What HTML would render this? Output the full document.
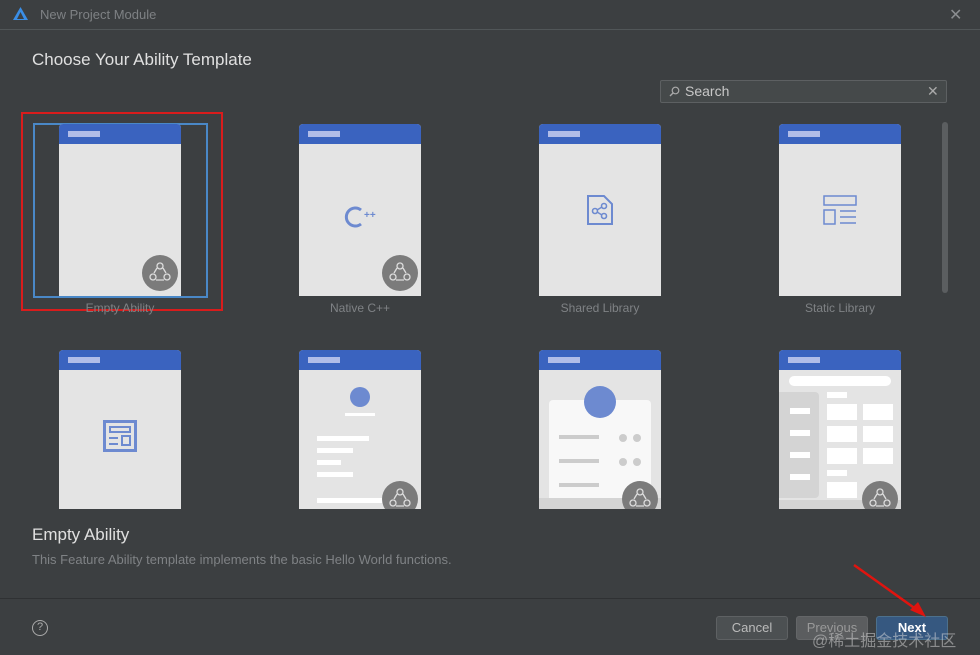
<!DOCTYPE html>
<html><head><meta charset="utf-8"><style>
*{margin:0;padding:0;box-sizing:border-box}
body{width:980px;height:655px;background:#3c3f41;font-family:"Liberation Sans","Noto Sans CJK SC",sans-serif;position:relative;overflow:hidden;color:#bbb}
.a{position:absolute}
.card{position:absolute;width:122px;background:#e4e4e4;border-radius:4px 4px 0 0;overflow:hidden}
.hd{height:20px;background:#3a63bf;position:relative}
.hd:after{content:"";position:absolute;left:9px;top:7px;width:32px;height:6px;background:#b1bde8}
.badge{position:absolute;left:83px;width:36px;height:36px;border-radius:50%;background:#7b7b7b}
.badge svg{position:absolute;left:0;top:0}
.lbl{position:absolute;width:122px;text-align:center;font-size:12px;color:#7f8285;top:301px}
.w{position:absolute;background:#fff}
.btn{position:absolute;top:616px;height:24px;border-radius:3px;font-size:13px;text-align:center;line-height:22px}
</style></head><body>
<div class="a" style="left:0;top:29px;width:980px;height:1px;background:#515658"></div>
<svg class="a" style="left:12px;top:6px" width="17" height="15" viewBox="0 0 17 15"><path d="M8.5 1L1 14h15z" fill="#3a8ee6"/><path d="M8.5 6L5 13h7z" fill="#3c3f41"/></svg>
<div class="a" style="left:40px;top:7px;font-size:13px;color:#7e8184">New Project Module</div>
<div class="a" style="left:949px;top:5px;font-size:16px;color:#8a8d90">✕</div>
<div class="a" style="left:32px;top:50px;font-size:17px;color:#e0e0e0">Choose Your Ability Template</div>
<div class="a" style="left:660px;top:80px;width:287px;height:23px;background:#45494a;border:1px solid #5d6062;border-radius:2px"></div>
<svg class="a" style="left:669px;top:86px" width="11" height="11"><circle cx="6.5" cy="4.5" r="3.3" stroke="#aaa" fill="none" stroke-width="1.2"/><path d="M4 7L1 10" stroke="#aaa" stroke-width="1.4"/></svg>
<div class="a" style="left:685px;top:83px;font-size:14px;color:#c8c8c8">Search</div>
<div class="a" style="left:927px;top:83px;font-size:14px;color:#aaa">✕</div>
<div class="a" style="left:942px;top:122px;width:6px;height:171px;background:#5b5e60;border-radius:3px"></div>

<!-- row 1 -->
<div class="a" style="left:33px;top:123px;width:175px;height:175px;border:2px solid #4a88c7"></div>
<div class="a" style="left:21px;top:112px;width:202px;height:199px;border:2px solid #d91c1c"></div>
<div class="card" style="left:59px;top:124px;height:172px"><div class="hd"></div><div class="badge" style="top:131px"><svg width="36" height="36"><g fill="none" stroke="#ddd" stroke-width="1.3"><circle cx="18" cy="11" r="3"/><circle cx="11" cy="22" r="3"/><circle cx="25" cy="22" r="3"/><path d="M15 13l-3 5M21 13l3 5M14 25h8"/></g></svg></div></div>
<div class="lbl" style="left:59px">Empty Ability</div>
<div class="card" style="left:299px;top:124px;height:172px"><div class="hd"></div>
<svg class="a" style="left:44px;top:80px" width="36" height="26"><path d="M18 6A9 9 0 1 0 18 20" fill="none" stroke="#6d8ad0" stroke-width="3"/><text x="21" y="14" font-size="10" font-weight="bold" fill="#6d8ad0" font-family="Liberation Sans">++</text></svg>
<div class="badge" style="top:131px"><svg width="36" height="36"><g fill="none" stroke="#ddd" stroke-width="1.3"><circle cx="18" cy="11" r="3"/><circle cx="11" cy="22" r="3"/><circle cx="25" cy="22" r="3"/><path d="M15 13l-3 5M21 13l3 5M14 25h8"/></g></svg></div></div>
<div class="lbl" style="left:299px">Native C++</div>
<div class="card" style="left:539px;top:124px;height:172px"><div class="hd"></div>
<svg class="a" style="left:46px;top:70px" width="30" height="32"><path d="M3 2h16l8 8v20H3z" fill="none" stroke="#6d8ad0" stroke-width="2"/><circle cx="10" cy="17" r="2.5" fill="none" stroke="#6d8ad0" stroke-width="1.6"/><circle cx="19" cy="12" r="2.5" fill="none" stroke="#6d8ad0" stroke-width="1.6"/><circle cx="19" cy="22" r="2.5" fill="none" stroke="#6d8ad0" stroke-width="1.6"/><path d="M12 16l5-3M12 18l5 3" stroke="#6d8ad0" stroke-width="1.4"/></svg>
</div>
<div class="lbl" style="left:539px">Shared Library</div>
<div class="card" style="left:779px;top:124px;height:172px"><div class="hd"></div>
<svg class="a" style="left:44px;top:71px" width="34" height="30"><rect x="1" y="1" width="32" height="9" fill="none" stroke="#6d8ad0" stroke-width="1.5"/><rect x="1" y="15" width="11" height="14" fill="none" stroke="#6d8ad0" stroke-width="1.5"/><path d="M17 16h16M17 22h16M17 28h16" stroke="#6d8ad0" stroke-width="1.5"/></svg>
</div>
<div class="lbl" style="left:779px">Static Library</div>

<!-- row 2 -->
<div class="card" style="left:59px;top:350px;height:159px"><div class="hd"></div>
<svg class="a" style="left:44px;top:70px" width="34" height="32"><rect x="1.5" y="1.5" width="31" height="29" fill="none" stroke="#6d8ad0" stroke-width="3"/><rect x="7" y="7" width="20" height="5" fill="none" stroke="#6d8ad0" stroke-width="2"/><path d="M6 18h9M6 24h9" stroke="#6d8ad0" stroke-width="2"/><rect x="19" y="16" width="8" height="9" fill="none" stroke="#6d8ad0" stroke-width="2"/></svg>
</div>
<div class="card" style="left:299px;top:350px;height:159px"><div class="hd"></div>
<div class="a" style="left:51px;top:37px;width:20px;height:20px;border-radius:50%;background:#6d8ad0"></div>
<div class="w" style="left:46px;top:63px;width:30px;height:3px"></div>
<div class="w" style="left:18px;top:86px;width:52px;height:5px"></div>
<div class="w" style="left:18px;top:98px;width:36px;height:5px"></div>
<div class="w" style="left:18px;top:110px;width:24px;height:5px"></div>
<div class="w" style="left:18px;top:122px;width:36px;height:5px"></div>
<div class="w" style="left:18px;top:148px;width:70px;height:5px"></div>
<div class="badge" style="top:131px"><svg width="36" height="36"><g fill="none" stroke="#ddd" stroke-width="1.3"><circle cx="18" cy="11" r="3"/><circle cx="11" cy="22" r="3"/><circle cx="25" cy="22" r="3"/><path d="M15 13l-3 5M21 13l3 5M14 25h8"/></g></svg></div></div>
<div class="card" style="left:539px;top:350px;height:159px"><div class="hd"></div>
<div class="w" style="left:10px;top:50px;width:102px;height:109px;background:#f8f8f8;border-radius:4px"></div>
<div class="a" style="left:45px;top:36px;width:32px;height:32px;border-radius:50%;background:#6d8ad0"></div>
<div class="a" style="left:20px;top:85px;width:40px;height:4px;background:#ccc"></div>
<div class="a" style="left:20px;top:109px;width:40px;height:4px;background:#ccc"></div>
<div class="a" style="left:20px;top:133px;width:40px;height:4px;background:#ccc"></div>
<div class="a" style="left:80px;top:84px;width:8px;height:8px;border-radius:50%;background:#ccc;box-shadow:14px 0 #ccc,0 24px #ccc,14px 24px #ccc"></div>
<div class="a" style="left:0;top:148px;width:122px;height:11px;background:#d4d4d4"></div>
<div class="badge" style="top:131px"><svg width="36" height="36"><g fill="none" stroke="#ddd" stroke-width="1.3"><circle cx="18" cy="11" r="3"/><circle cx="11" cy="22" r="3"/><circle cx="25" cy="22" r="3"/><path d="M15 13l-3 5M21 13l3 5M14 25h8"/></g></svg></div></div>
<div class="card" style="left:779px;top:350px;height:159px"><div class="hd"></div>
<div class="w" style="left:10px;top:26px;width:102px;height:10px;border-radius:5px"></div>
<div class="a" style="left:0;top:42px;width:40px;height:106px;background:#d4d4d4;border-radius:0 4px 4px 0"></div>
<div class="w" style="left:11px;top:58px;width:20px;height:6px;box-shadow:0 22px #fff,0 44px #fff,0 66px #fff"></div>
<div class="w" style="left:48px;top:42px;width:20px;height:6px"></div>
<div class="w" style="left:48px;top:54px;width:30px;height:16px;box-shadow:36px 0 #fff,0 22px #fff,36px 22px #fff,0 44px #fff,36px 44px #fff"></div>
<div class="w" style="left:48px;top:120px;width:20px;height:6px"></div>
<div class="w" style="left:48px;top:132px;width:30px;height:16px"></div>
<div class="a" style="left:0;top:150px;width:122px;height:9px;background:#d4d4d4"></div>
<div class="badge" style="top:131px"><svg width="36" height="36"><g fill="none" stroke="#ddd" stroke-width="1.3"><circle cx="18" cy="11" r="3"/><circle cx="11" cy="22" r="3"/><circle cx="25" cy="22" r="3"/><path d="M15 13l-3 5M21 13l3 5M14 25h8"/></g></svg></div></div>

<div class="a" style="left:32px;top:525px;font-size:17px;color:#e0e0e0">Empty Ability</div>
<div class="a" style="left:32px;top:552px;font-size:13px;color:#7f8285">This Feature Ability template implements the basic Hello World functions.</div>
<div class="a" style="left:0;top:598px;width:980px;height:1px;background:#2f3133"></div>
<div class="a" style="left:32px;top:620px;width:16px;height:16px;border:1.5px solid #aaa;border-radius:50%;font-size:11px;text-align:center;line-height:13px;color:#aaa">?</div>
<div class="btn" style="left:716px;width:72px;background:#4c5052;border:1px solid #5e6163;color:#bbb">Cancel</div>
<div class="btn" style="left:796px;width:72px;background:#5b5d5f;border:1px solid #646668;color:#999">Previous</div>
<div class="btn" style="left:876px;width:72px;background:#365880;border:1px solid #4c708c;color:#fff;font-weight:bold">Next</div>
<div class="a" style="left:812px;top:627px;font-size:16px;color:rgba(220,220,220,.5)">@稀土掘金技术社区</div>
<svg class="a" style="left:850px;top:560px" width="80" height="60"><path d="M4 5L70 52" stroke="#e0140f" stroke-width="2.5"/><path d="M76 57L60 50L68 42z" fill="#e0140f"/></svg>
</body></html>
